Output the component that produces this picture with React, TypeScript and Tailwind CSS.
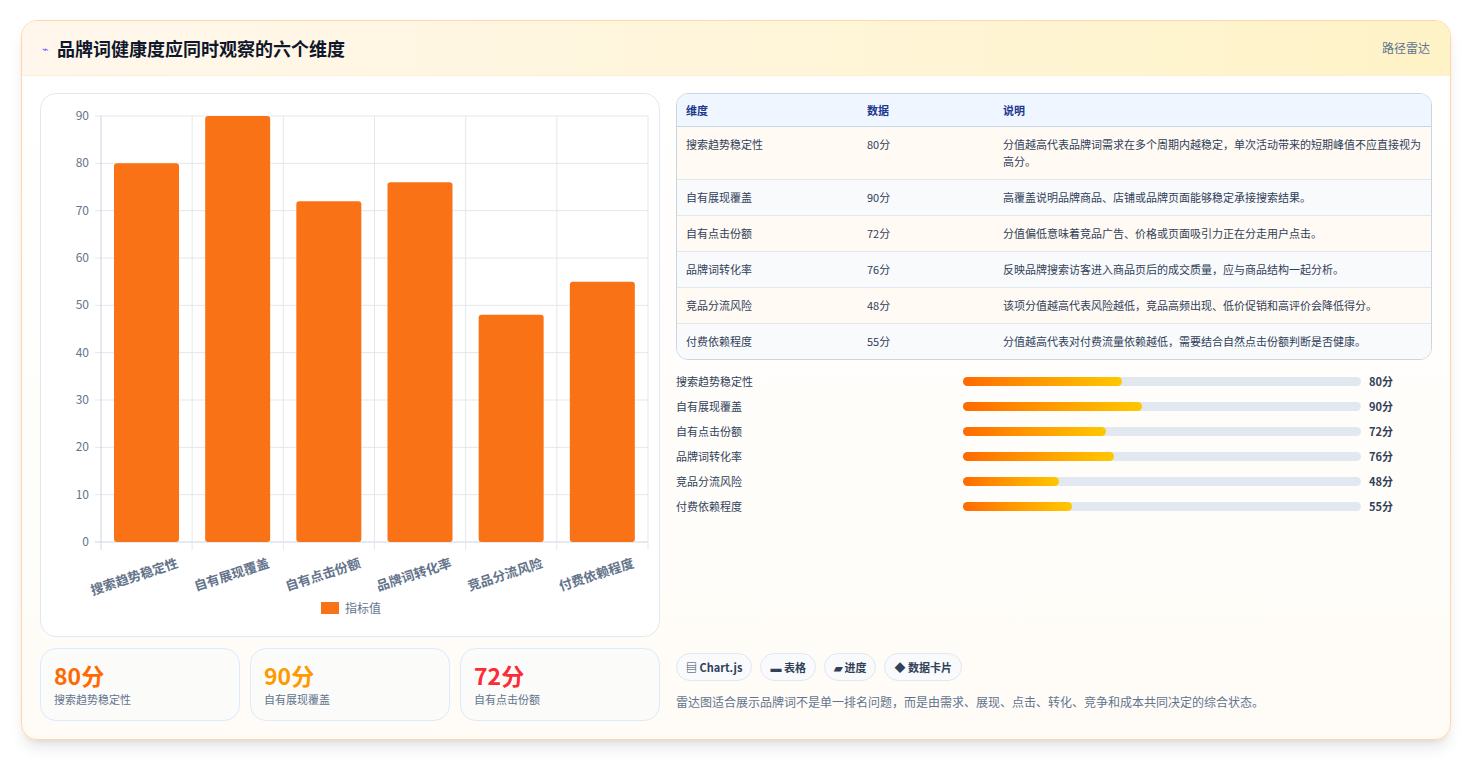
const rows = [
  { name: "搜索趋势稳定性", v: 80, d: "分值越高代表品牌词需求在多个周期内越稳定，单次活动带来的短期峰值不应直接视为高分。" },
  { name: "自有展现覆盖", v: 90, d: "高覆盖说明品牌商品、店铺或品牌页面能够稳定承接搜索结果。" },
  { name: "自有点击份额", v: 72, d: "分值偏低意味着竞品广告、价格或页面吸引力正在分走用户点击。" },
  { name: "品牌词转化率", v: 76, d: "反映品牌搜索访客进入商品页后的成交质量，应与商品结构一起分析。" },
  { name: "竞品分流风险", v: 48, d: "该项分值越高代表风险越低，竞品高频出现、低价促销和高评价会降低得分。" },
  { name: "付费依赖程度", v: 55, d: "分值越高代表对付费流量依赖越低，需要结合自然点击份额判断是否健康。" },
];

const font = { fontFamily: '"Noto Sans CJK SC", "Noto Sans", sans-serif' };

function BarChart() {
  const x0 = 60, x1 = 607, top = 22, bottom = 448;
  const step = (x1 - x0) / 6;
  const y = (v: number) => bottom - (v / 90) * (bottom - top);
  return (
    <svg width="618" height="542" className="block">
      {[0, 10, 20, 30, 40, 50, 60, 70, 80, 90].map((t) => (
        <g key={t}>
          <line x1={x0 - 6} x2={x1} y1={y(t)} y2={y(t)} stroke={t === 0 ? "#cbd5e1" : "#e5e7eb"} />
          <text x={x0 - 12} y={y(t) + 4} textAnchor="end" fontSize="12" fill="#64748b" style={font}>{t}</text>
        </g>
      ))}
      {[0, 1, 2, 3, 4, 5, 6].map((i) => (
        <line key={i} x1={x0 + i * step} x2={x0 + i * step} y1={top} y2={bottom + 8} stroke={i === 0 ? "#cbd5e1" : "#e5e7eb"} />
      ))}
      {rows.map((r, i) => (
        <g key={r.name}>
          <rect x={x0 + i * step + 13} y={y(r.v)} width={65} height={bottom - y(r.v)} rx="3" fill="#f97316" />
          <text
            x={x0 + i * step + 78}
            y={bottom + 25}
            textAnchor="end"
            fontSize="13"
            fontWeight="600"
            fill="#64748b"
            transform={`rotate(-18 ${x0 + i * step + 78} ${bottom + 25})`}
            style={font}
          >
            {r.name}
          </text>
        </g>
      ))}
      <rect x="280" y="508" width="18" height="12" fill="#f97316" />
      <text x="304" y="519" fontSize="12" fill="#64748b" style={font}>指标值</text>
    </svg>
  );
}

export default function App() {
  return (
    <div className="min-h-screen bg-white px-[21px] pt-[20px]" style={font}>
      <div className="w-[1430px] rounded-2xl border border-orange-200 bg-gradient-to-b from-white to-[#fffcf7] shadow-lg overflow-hidden">
        <div className="flex h-[55px] items-center justify-between border-b border-orange-100 bg-gradient-to-r from-orange-50 to-amber-100 px-5">
          <div className="flex items-center gap-2">
            <span className="text-[11px] text-indigo-500">⌁</span>
            <span className="text-[18px] font-bold text-slate-900">品牌词健康度应同时观察的六个维度</span>
          </div>
          <span className="text-[12px] text-slate-500">路径雷达</span>
        </div>
        <div className="flex gap-4 px-[18px] pt-[17px] pb-[18px]">
          <div className="w-[620px] shrink-0">
            <div className="h-[544px] rounded-2xl border border-slate-200 bg-white">
              <BarChart />
            </div>
            <div className="mt-[11px] grid grid-cols-3 gap-[10px]">
              {[
                { v: "80分", n: "搜索趋势稳定性", c: "text-orange-500" },
                { v: "90分", n: "自有展现覆盖", c: "text-amber-500" },
                { v: "72分", n: "自有点击份额", c: "text-red-500" },
              ].map((s) => (
                <div key={s.n} className="h-[73px] rounded-2xl border border-blue-100 bg-slate-50/50 px-[13px] pt-[10px]">
                  <div className={`text-[23px] font-bold leading-8 ${s.c}`}>{s.v}</div>
                  <div className="text-[11px] text-slate-500">{s.n}</div>
                </div>
              ))}
            </div>
          </div>
          <div className="flex flex-1 flex-col">
            <div className="overflow-hidden rounded-xl border border-slate-300 text-[11px]">
              <div className="grid h-[33px] grid-cols-[181px_136px_1fr] items-center border-b border-slate-300 bg-blue-50 px-[9px] font-semibold text-blue-900">
                <span>维度</span><span>数据</span><span>说明</span>
              </div>
              {rows.map((r, i) => (
                <div
                  key={r.name}
                  className={`grid grid-cols-[181px_136px_1fr] items-start border-b border-slate-200 px-[9px] py-[9px] leading-[17px] text-slate-700 last:border-b-0 ${i % 2 === 0 ? "bg-orange-50/60" : "bg-slate-50"}`}
                >
                  <span>{r.name}</span>
                  <span>{r.v}分</span>
                  <span>{r.d}</span>
                </div>
              ))}
            </div>
            <div className="mt-[13px] flex flex-col gap-[8px] text-[11px] text-slate-700">
              {rows.map((r) => (
                <div key={r.name} className="flex h-[17px] items-center">
                  <span className="w-[287px]">{r.name}</span>
                  <div className="h-[9px] w-[398px] rounded-full bg-slate-200">
                    <div className="h-full rounded-full bg-gradient-to-r from-orange-500 to-yellow-400" style={{ width: `${r.v / 2}%` }} />
                  </div>
                  <span className="ml-2 font-semibold">{r.v}分</span>
                </div>
              ))}
            </div>
            <div className="mt-auto">
              <div className="flex gap-2 text-[11px] font-semibold text-slate-700">
                {["▤ Chart.js", "▬ 表格", "▰ 进度", "◆ 数据卡片"].map((c) => (
                  <span key={c} className="rounded-full border border-slate-200 bg-slate-50 px-[9px] py-[5px]">{c}</span>
                ))}
              </div>
              <p className="mt-[12px] mb-[10px] text-[12px] text-slate-500">
                雷达图适合展示品牌词不是单一排名问题，而是由需求、展现、点击、转化、竞争和成本共同决定的综合状态。
              </p>
            </div>
          </div>
        </div>
      </div>
    </div>
  );
}
